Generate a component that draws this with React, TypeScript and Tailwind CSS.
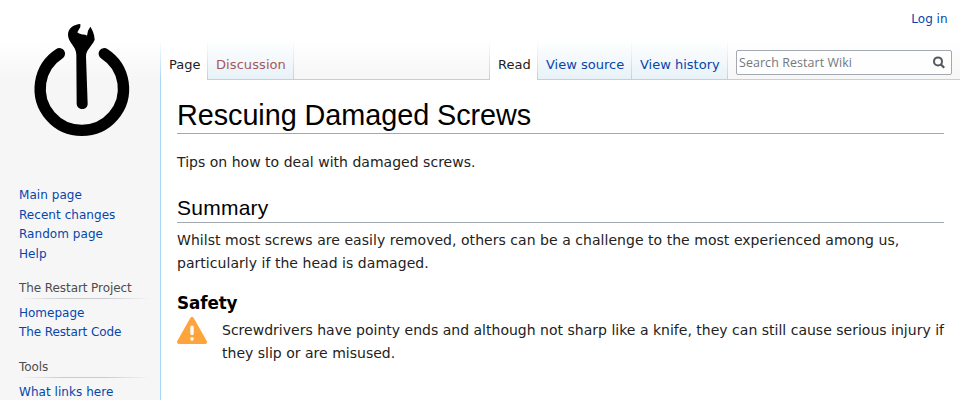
import type { ReactNode } from 'react';

const link = 'text-[#0645ad]';

function Edge() {
  return <span className="h-10 w-px shrink-0 bg-linear-to-b from-white to-[#a7d7f9]" />;
}

function Tab({ children, active, className, width }: { children: ReactNode; active?: boolean; className: string; width: string }) {
  return (
    <>
      <a
        className={`flex h-10 items-start whitespace-nowrap pl-2 pt-[17px] text-[13px] leading-[15px] ${width} ${className} ${
          active ? 'bg-white' : 'border-b border-[#a7d7f9] bg-linear-to-b from-white to-[#e8f2f8]'
        }`}
      >
        {children}
      </a>
      <Edge />
    </>
  );
}

function Logo() {
  return (
    <svg width="130" height="140" viewBox="0 0 390 420" className="mt-[10px] ml-5 block">
      <path d="M118 131A125 125 0 1 0 253 131" fill="none" stroke="#000" strokeWidth="34" strokeLinecap="round" />
      <path
        d="M181 42C162 43 144 55 144 74C144 97 169 108 169 134L170 281C171 302 203 302 203 281L198 140C198 118 214 112 224 89C223 72 218 60 211 50L204 62L201 77C192 72 183 76 172 67L181 51Z"
        fill="#000"
      />
    </svg>
  );
}

function Portal({ title, items, className }: { title?: string; items: string[]; className: string }) {
  return (
    <nav className={`ml-[19px] w-[131px] text-[12px] ${className}`}>
      {title && (
        <>
          <h3 className="h-[18px] leading-[16px] tracking-[-0.08px] text-[#4d4d4d]">{title}</h3>
          <div className="mb-[4.5px] h-px bg-[linear-gradient(to_right,transparent,#c8ccd1_33%,#c8ccd1_66%,transparent)]" />
        </>
      )}
      <ul>
        {items.map((item) => (
          <li key={item} className="h-[19.5px] leading-[18px]">
            <a className={`${link} ${item === 'The Restart Code' ? 'tracking-[-0.1px]' : item === 'Homepage' ? '' : 'tracking-[0.05px]'}`}>{item}</a>
          </li>
        ))}
      </ul>
    </nav>
  );
}

export default function App() {
  return (
    <div className="flex h-[400px] w-[960px] overflow-hidden bg-[#f6f6f6] bg-[linear-gradient(to_bottom,#ffffff_0px,#ffffff_40px,#f6f6f6_80px)] font-['DejaVu_Sans',sans-serif] text-[#222]">
      <aside className="w-40 shrink-0">
        <Logo />
        <Portal className="mt-[36px]" items={['Main page', 'Recent changes', 'Random page', 'Help']} />
        <Portal className="mt-[16px]" title="The Restart Project" items={['Homepage', 'The Restart Code']} />
        <Portal className="mt-[16.5px]" title="Tools" items={['What links here']} />
      </aside>
      <div className="flex min-w-0 flex-1 flex-col">
        <div className="flex h-10 shrink-0 justify-end pr-[12.5px] pt-[11px] text-[12px] leading-4">
          <a className={link}>Log in</a>
        </div>
        <header className="flex h-10 shrink-0">
          <Edge />
          <Tab active width="w-[46px]" className="text-[#222]">Page</Tab>
          <Tab width="w-[85px]" className="tracking-[0.08px] text-[#a55858]">Discussion</Tab>
          <div className="flex-1 border-b border-[#a7d7f9]" />
          <Edge />
          <Tab active width="w-[47px]" className="text-[#222]">Read</Tab>
          <Tab width="w-[93px]" className={link}>View source</Tab>
          <Tab width="w-[95px]" className={link}>View history</Tab>
          <div className="w-[232px] border-b border-[#a7d7f9] pl-2 pt-[10px]">
            <div className="flex h-[25px] w-[216px] items-center justify-between rounded-[2px] border border-[#a2a9b1] bg-white/80 pl-[2px] pr-[5px]">
              <span className="font-['Open_Sans',sans-serif] text-[12.4px] leading-4 tracking-[0.1px] text-[#72777d]">Search Restart Wiki</span>
              <svg width="14" height="14" viewBox="0 0 14 14" fill="none" stroke="#54595d">
                <circle cx="6" cy="5.4" r="4" strokeWidth="2" />
                <path d="M8.7 8.2L12.2 11.7" strokeWidth="2.3" />
              </svg>
            </div>
          </div>
        </header>
        <main className="flex-1 border-l border-[#a7d7f9] bg-white pl-4 pr-[15px] pt-[17px] text-[14px] leading-[22.4px]">
          <h1 className="mr-px h-[37px] border-b border-[#a2a9b1] font-['Liberation_Sans',sans-serif] text-[28.8px] leading-[37px] tracking-[-0.05px] text-black">
            Rescuing Damaged Screws
          </h1>
          <p className="mt-[17px] tracking-[0.02px]">Tips on how to deal with damaged screws.</p>
          <h2 className="mt-[21px] mr-px h-[29px] border-b border-[#a2a9b1] font-['Liberation_Sans',sans-serif] text-[21px] leading-[28px] tracking-[0.25px] text-black">
            Summary
          </h2>
          <p className="mt-[6px] leading-[23px] tracking-[0.04px]">
            Whilst most screws are easily removed, others can be a challenge to the most experienced among us, particularly if the head is damaged.
          </p>
          <h3 className="mt-[15px] text-[16.8px] font-bold leading-[27px] tracking-[-0.1px] text-black">Safety</h3>
          <div className="flex">
            <svg width="30" height="27" viewBox="0 0 30 27" className="mr-[15px] shrink-0">
              <path d="M15 2L28 25H2Z" fill="#ffa43d" stroke="#ffa43d" strokeWidth="4" strokeLinejoin="round" />
              <path d="M15 10.2V16.5M15 21.8V22" stroke="#fff" strokeWidth="3.4" strokeLinecap="round" />
            </svg>
            <p className="mt-[2px] leading-[23px] tracking-[0.01px]">
              Screwdrivers have pointy ends and although not sharp like a knife, they can still cause serious injury if they slip or are misused.
            </p>
          </div>
        </main>
      </div>
    </div>
  );
}
